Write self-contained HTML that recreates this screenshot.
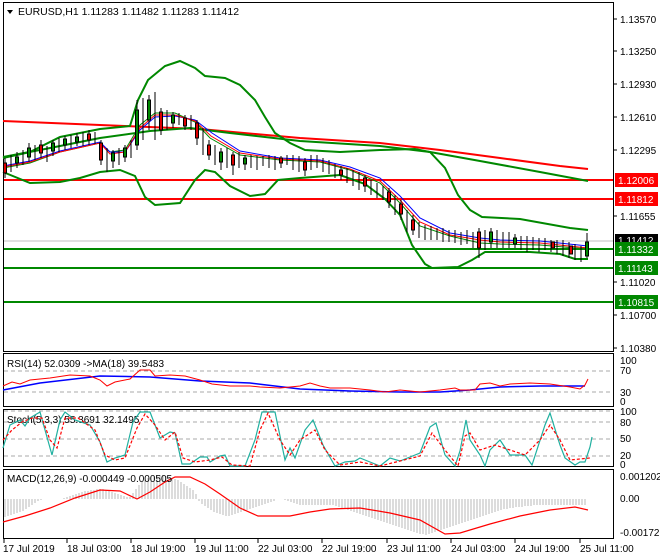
<!DOCTYPE html>
<html><head><meta charset="utf-8"><style>
html,body{margin:0;padding:0;background:#fff;width:660px;height:560px;overflow:hidden}
svg{display:block;font-family:"Liberation Sans",sans-serif;font-size:10px}
</style></head><body>
<svg width="660" height="560" viewBox="0 0 660 560" xmlns="http://www.w3.org/2000/svg">
<rect width="660" height="560" fill="#fff"/>
<g fill="none" stroke="#000" stroke-width="1">
<rect x="3.5" y="2.5" width="610" height="349"/>
<rect x="3.5" y="353.5" width="610" height="53"/>
<rect x="3.5" y="409.5" width="610" height="57"/>
<rect x="3.5" y="469.5" width="610" height="69"/>
</g>
<polygon points="7,10 13,10 10,14" fill="#000"/>
<text x="18" y="15" font-size="10.5">EURUSD,H1  1.11283 1.11482 1.11283 1.11412</text>

<line x1="4" y1="241" x2="613" y2="241" stroke="#c0c0c0"/>
<line x1="4" y1="180" x2="613" y2="180" stroke="#f00" stroke-width="2"/>
<line x1="4" y1="199" x2="613" y2="199" stroke="#f00" stroke-width="2"/>
<line x1="4" y1="249" x2="613" y2="249" stroke="#080" stroke-width="2"/>
<line x1="4" y1="268" x2="613" y2="268" stroke="#080" stroke-width="2"/>
<line x1="4" y1="302" x2="613" y2="302" stroke="#080" stroke-width="2"/>
<polyline fill="none" stroke="#f00" stroke-width="2" points="3,121 100,125 200,129 300,138 380,143 440,150 500,158 560,166 588,169"/>
<polyline fill="none" stroke="#080" stroke-width="2" points="3,157 40,150 100,138 150,131 190,128 230,133 300,141 380,146 430,152 480,161 540,172 588,181"/>
<polyline fill="none" stroke="#080" stroke-width="2" points="3,158 30,152 60,137 100,129 130,126 138,100 148,80 165,66 180,61 195,68 205,76 225,78 240,85 255,100 265,117 275,133 290,143 305,150 340,152 380,150 415,149 430,152 445,168 458,195 470,210 482,217 520,219 570,228 588,230"/>
<polyline fill="none" stroke="#080" stroke-width="2" points="3,172 30,183 60,182 80,178 100,172 120,170 135,176 145,197 155,205 180,203 195,180 205,170 215,172 230,186 250,196 265,194 278,180 300,178 340,175 365,184 385,199 400,215 412,245 425,264 432,268 458,267 472,260 485,252 530,252 560,254 575,259 588,259"/>
<polyline fill="none" stroke="#080" stroke-width="1" points="3,168 30,163 60,152 100,143 110,152 125,150 140,125 155,113 175,113 195,122 210,138 240,155 280,160 320,162 350,170 380,183 400,203 420,226 450,236 480,243 500,244 540,245 588,249"/>
<polyline fill="none" stroke="#00f" stroke-width="1" points="3,166 30,161 60,151 100,142 110,152 125,152 140,130 155,117 175,116 195,120 212,133 240,151 280,158 320,160 350,167 380,178 400,196 420,218 450,233 480,238 500,240 540,241 588,246"/>
<polyline fill="none" stroke="#f00" stroke-width="1" points="3,167 30,162 60,152 100,143 110,154 125,152 140,128 155,115 175,115 195,121 211,136 240,153 280,159 320,161 350,169 380,181 400,200 420,222 450,235 480,240 500,242 540,243 588,248"/>
<g stroke="#000" stroke-width="1">
<path d="M5,158V178M11,155V172M17,152V168M23,150V165M29,143V162M35,145V160M41,140V158M47,146V162M53,140V156M59,138V152M65,136V150M71,135V148M77,133V146M83,132V146M89,130V145M95,132V144M101,140V165M107,148V172M113,150V168M119,148V165M125,145V162M131,140V158M137,100V150M143,98V140M149,95V130M155,92V140M161,108V135M167,110V130M173,112V128M179,113V125M185,115V130M191,115V130M197,120V145M203,128V155M209,140V160M215,145V165M221,148V170M227,148V168M233,152V175M239,152V168M245,155V170M251,155V168M257,156V170M263,156V166M269,155V168M275,156V170M281,156V168M287,155V165M293,155V170M299,156V172M305,158V176M311,155V170M317,155V168M323,158V172M329,160V174M335,164V178M341,166V180M347,168V183M353,170V186M359,172V190M365,175V192M371,180V195M377,183V198M383,186V200M389,188V208M395,195V215M401,200V220M407,210V232M413,215V235M419,222V238M425,225V240M431,226V240M437,228V240M443,228V242M449,230V242M455,230V243M461,232V245M467,230V244M473,232V248M479,228V258M485,230V250M491,228V248M497,230V248M503,232V248M509,232V248M515,234V248M521,236V250M527,236V252M533,237V250M539,238V252M545,238V250M551,240V252M557,240V254M563,240V256M569,242V258M575,244V260M581,246V262M587,233V258"/>
</g>
<g stroke="#000" stroke-width="1">
<rect x="3.5" y="163" width="3" height="10" fill="#d00"/>
<rect x="15.5" y="157" width="3" height="6" fill="#080"/>
<rect x="27.5" y="148" width="3" height="9" fill="#080"/>
<rect x="39.5" y="145" width="3" height="8" fill="#d00"/>
<rect x="51.5" y="143" width="3" height="8" fill="#080"/>
<rect x="63.5" y="139" width="3" height="6" fill="#080"/>
<rect x="75.5" y="137" width="3" height="5" fill="#080"/>
<rect x="87.5" y="134" width="3" height="6" fill="#d00"/>
<rect x="99.5" y="143" width="3" height="17" fill="#d00"/>
<rect x="111.5" y="153" width="3" height="8" fill="#080"/>
<rect x="123.5" y="148" width="3" height="9" fill="#080"/>
<rect x="135.5" y="110" width="3" height="35" fill="#080"/>
<rect x="147.5" y="100" width="3" height="20" fill="#080"/>
<rect x="159.5" y="112" width="3" height="18" fill="#d00"/>
<rect x="171.5" y="115" width="3" height="8" fill="#080"/>
<rect x="183.5" y="118" width="3" height="8" fill="#d00"/>
<rect x="195.5" y="123" width="3" height="15" fill="#d00"/>
<rect x="207.5" y="145" width="3" height="10" fill="#d00"/>
<rect x="219.5" y="152" width="3" height="10" fill="#080"/>
<rect x="231.5" y="155" width="3" height="10" fill="#d00"/>
<rect x="243.5" y="158" width="3" height="6" fill="#080"/>
<rect x="279.5" y="158" width="3" height="5" fill="#d00"/>
<rect x="303.5" y="162" width="3" height="8" fill="#d00"/>
<rect x="339.5" y="170" width="3" height="5" fill="#d00"/>
<rect x="363.5" y="178" width="3" height="8" fill="#d00"/>
<rect x="387.5" y="192" width="3" height="10" fill="#d00"/>
<rect x="399.5" y="204" width="3" height="10" fill="#d00"/>
<rect x="411.5" y="220" width="3" height="10" fill="#d00"/>
<rect x="477.5" y="232" width="3" height="16" fill="#d00"/>
<rect x="489.5" y="232" width="3" height="10" fill="#080"/>
<rect x="513.5" y="238" width="3" height="6" fill="#080"/>
<rect x="551.5" y="242" width="3" height="6" fill="#d00"/>
<rect x="569.5" y="246" width="3" height="8" fill="#d00"/>
<rect x="585.5" y="242" width="3" height="14" fill="#080"/>
</g>

<g fill="#000">
<text x="620" y="23">1.13570</text>
<text x="620" y="55">1.13250</text>
<text x="620" y="88">1.12930</text>
<text x="620" y="121">1.12610</text>
<text x="620" y="154">1.12295</text>
<text x="620" y="220">1.11655</text>
<text x="620" y="286">1.11020</text>
<text x="620" y="319">1.10700</text>
<text x="620" y="352">1.10380</text>
</g>
<g stroke="#000"><path d="M613,19h4M613,51h4M613,84h4M613,117h4M613,150h4M613,216h4M613,282h4M613,315h4M613,348h4"/></g>
<rect x="615" y="173" width="43" height="14" fill="#f00"/><text x="618" y="184" fill="#fff">1.12006</text>
<rect x="615" y="192" width="43" height="14" fill="#f00"/><text x="618" y="203" fill="#fff">1.11812</text>
<rect x="615" y="234" width="43" height="12" fill="#000"/><text x="618" y="244" fill="#fff">1.11412</text>
<rect x="615" y="242" width="43" height="14" fill="#080"/><text x="618" y="253" fill="#fff">1.11332</text>
<rect x="615" y="261" width="43" height="14" fill="#080"/><text x="618" y="272" fill="#fff">1.11143</text>
<rect x="615" y="295" width="43" height="14" fill="#080"/><text x="618" y="306" fill="#fff">1.10815</text>

<!-- RSI -->
<g stroke="#aaa" stroke-dasharray="4,3"><line x1="4" y1="371" x2="613" y2="371"/><line x1="4" y1="392" x2="613" y2="392"/></g>
<text x="7" y="367">RSI(14) 52.0309  -&gt;MA(18) 39.5483</text>
<polyline fill="none" stroke="#00f" stroke-width="1.5" points="3,390 40,383 100,376 150,377 200,381 250,383 300,389 350,391 400,392 440,392 470,390 500,387 540,386 585,386"/>
<polyline fill="none" stroke="#f00" stroke-width="1" points="3,386 12,382 20,384 30,380 50,378 70,375 90,376 100,380 107,386 115,382 130,379 140,370 150,370 155,376 170,375 185,376 200,380 212,384 230,386 250,386 260,387 280,388 300,386 310,383 320,386 330,388 350,388 370,390 385,392 400,390 420,392 440,390 455,388 460,390 475,390 480,384 490,383 500,386 510,384 530,383 550,384 570,387 580,389 585,385 588,379"/>
<g fill="#000"><text x="620" y="364">100</text><text x="620" y="374">70</text><text x="620" y="396">30</text><text x="620" y="405">0</text></g>

<!-- Stoch -->
<g stroke="#aaa" stroke-dasharray="4,3"><line x1="4" y1="411" x2="613" y2="411"/><line x1="4" y1="422" x2="613" y2="422"/><line x1="4" y1="439" x2="613" y2="439"/><line x1="4" y1="456" x2="613" y2="456"/></g>
<text x="7" y="423">Stoch(5,3,3) 55.3691 32.1495</text>
<polyline fill="none" stroke="#20b0a0" stroke-width="1.2" points="3,448 10,425 20,420 25,426 30,418 40,412 45,430 52,455 60,420 65,412 75,420 90,425 100,442 107,462 115,458 125,455 133,422 140,412 150,412 160,438 170,432 175,433 182,464 190,464 200,457 207,457 210,462 220,456 225,455 230,466 245,466 255,440 262,412 275,412 285,460 290,448 295,458 305,430 313,420 323,445 335,466 345,462 355,461 360,458 380,466 385,462 390,458 400,461 410,457 420,453 430,427 436,423 445,455 455,466 460,451 466,420 470,440 480,455 485,466 490,450 500,440 510,455 525,455 532,465 545,425 550,413 560,445 565,458 575,465 580,462 585,462 590,447 592,437"/>
<polyline fill="none" stroke="#f00" stroke-width="1.2" stroke-dasharray="3,2" points="3,440 12,430 22,422 32,418 42,418 50,440 57,448 65,418 78,418 95,430 105,455 115,460 125,458 137,428 145,414 155,425 165,440 175,432 183,458 195,462 210,460 222,457 232,465 250,466 260,430 268,413 280,440 290,455 300,440 315,430 325,450 340,465 360,462 380,466 400,461 420,456 432,433 445,450 458,466 465,436 470,433 480,450 495,445 510,450 525,455 540,440 550,425 560,440 570,460 590,458"/>
<g fill="#000"><text x="620" y="415">100</text><text x="620" y="426">80</text><text x="620" y="442">50</text><text x="620" y="459">20</text><text x="620" y="468">0</text></g>

<!-- MACD -->
<g stroke="#b8b8b8" stroke-width="1">
<path d="M5,499v18M8,499v17M11,499v16M14,499v15M17,499v14M20,499v13M23,499v12M26,499v10M29,499v8M32,499v6M35,499v4M38,499v2M41,499v1"/>
<path d="M64,499v-1M67,499v-2M70,499v-3M73,499v-4M76,499v-5M79,499v-6M82,499v-7M85,499v-8M88,499v-8M91,499v-9M94,499v-9M97,499v-10M100,499v-10M103,499v-10M106,499v-9M109,499v-8M112,499v-7M115,499v-6M118,499v-5M121,499v-4M124,499v-3M127,499v-2M130,499v-2"/>
<path d="M133,499v-6M136,499v-10M139,499v-14M142,499v-17M145,499v-19M148,499v-21M151,499v-22M154,499v-23M157,499v-24M160,499v-24M163,499v-24M166,499v-23M169,499v-22M172,499v-21M175,499v-20M178,499v-19M181,499v-17M184,499v-15M187,499v-13M190,499v-11M193,499v-9M196,499v-5"/>
<path d="M199,499v2M202,499v5M205,499v7M208,499v9M211,499v11M214,499v13M217,499v14M220,499v15M223,499v16M226,499v17M229,499v17M232,499v16M235,499v15M238,499v14M241,499v13M244,499v12M247,499v11M250,499v10M253,499v9M256,499v8M259,499v7M262,499v6M265,499v5M268,499v4M271,499v3M274,499v2"/>
<path d="M285,499v1M288,499v2M291,499v3M294,499v4M297,499v5M300,499v6M303,499v6M306,499v6M309,499v6M312,499v6M315,499v6M318,499v6M321,499v6M324,499v6M327,499v6"/>
<path d="M330,499v6M333,499v6M336,499v7M339,499v8M342,499v9M345,499v10M348,499v11M351,499v12M354,499v13M357,499v14M360,499v15M363,499v16M366,499v17M369,499v18M372,499v19M375,499v20M378,499v21M381,499v22M384,499v23M387,499v24M390,499v25M393,499v26M396,499v27M399,499v28M402,499v29M405,499v30M408,499v31M411,499v32M414,499v33M417,499v34M420,499v35M423,499v35M426,499v36M429,499v35M432,499v34M435,499v33M438,499v32M441,499v31M444,499v30M447,499v29M450,499v28M453,499v27M456,499v26M459,499v25M462,499v24M465,499v23M468,499v22M471,499v21M474,499v20M477,499v19M480,499v18M483,499v17M486,499v16M489,499v15M492,499v14M495,499v13M498,499v12M501,499v11M504,499v10M507,499v10M510,499v9M513,499v9M516,499v8M519,499v8M522,499v8M525,499v7M528,499v7M531,499v7M534,499v6M537,499v6M540,499v6M543,499v6M546,499v6M549,499v6M552,499v6M555,499v6M558,499v6M561,499v6M564,499v6M567,499v6M570,499v6M573,499v6M576,499v6M579,499v6M582,499v6M585,499v6"/>
</g>
<polyline fill="none" stroke="#f00" stroke-width="1.2" points="3,522 25,516 50,508 75,498 100,490 120,491 137,499 150,492 165,482 175,477 190,477 205,484 220,494 240,508 258,516 290,516 310,512 330,509 360,508 390,513 420,520 445,534 460,533 490,524 520,516 550,510 575,507 588,510"/>
<text x="7" y="482">MACD(12,26,9) -0.000449 -0.000505</text>
<g fill="#000"><text x="620" y="480">0.001202</text><text x="620" y="502">0.00</text><text x="620" y="536">-0.001726</text></g>

<g stroke="#000"><path d="M4,539v4M67,539v4M131,539v4M195,539v4M258,539v4M322,539v4M387,539v4M451,539v4M515,539v4M580,539v4"/></g>
<g fill="#000">
<text x="3" y="552">17 Jul 2019</text>
<text x="67" y="552">18 Jul 03:00</text>
<text x="131" y="552">18 Jul 19:00</text>
<text x="195" y="552">19 Jul 11:00</text>
<text x="258" y="552">22 Jul 03:00</text>
<text x="322" y="552">22 Jul 19:00</text>
<text x="387" y="552">23 Jul 11:00</text>
<text x="451" y="552">24 Jul 03:00</text>
<text x="515" y="552">24 Jul 19:00</text>
<text x="580" y="552">25 Jul 11:00</text>
</g>
</svg>
</body></html>
